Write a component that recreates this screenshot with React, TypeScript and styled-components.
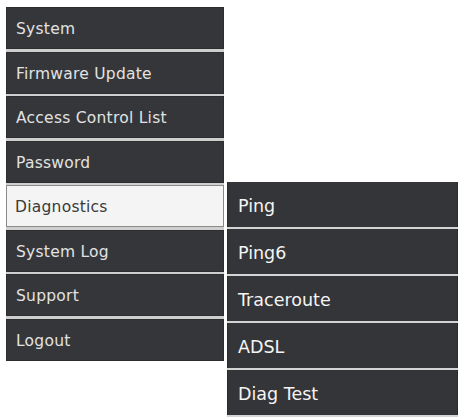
import React from "react";
import styled, { createGlobalStyle } from "styled-components";

const Global = createGlobalStyle`
  html, body { margin: 0; padding: 0; background: #ffffff; }
  body { font-family: "DejaVu Sans", Verdana, sans-serif; }
`;

const Page = styled.div`
  display: flex;
  align-items: flex-start;
  padding: 7px 0 0 6px;
  gap: 3px;
`;

const Menu = styled.ul`
  list-style: none;
  margin: 0;
  padding: 0;
  width: 218px;
  display: flex;
  flex-direction: column;
  background: #cfcfcf;
  gap: 2.5px;
`;

const Item = styled.li<{ $active?: boolean }>`
  height: 42px;
  box-sizing: border-box;
  display: flex;
  align-items: center;
  padding: 2px 0 0 ${(p) => (p.$active ? "8px" : "9px")};
  font-size: 15.5px;
  letter-spacing: 0.25px;
  background: ${(p) => (p.$active ? "#f4f4f4" : "#353639")};
  color: ${(p) => (p.$active ? "#3a3a3a" : "#e2e2e2")};
  border: ${(p) => (p.$active ? "1px solid #8a8a8a" : "1px solid #2c2d2f")};
`;

const SubMenu = styled.ul`
  list-style: none;
  margin: 175px 0 0 0;
  padding: 0 0 2px 0;
  width: 231px;
  display: flex;
  flex-direction: column;
  background: #d4d4d4;
  gap: 2px;
`;

const SubItem = styled.li`
  height: 45px;
  box-sizing: border-box;
  display: flex;
  align-items: center;
  padding: 2px 0 0 10px;
  font-size: 17.5px;
  color: #f4f4f4;
  background: #343538;
  border-left: 1px solid #2a2b2d;
  border-right: 1px solid #2a2b2d;
`;

const mainItems = [
  "System",
  "Firmware Update",
  "Access Control List",
  "Password",
  "Diagnostics",
  "System Log",
  "Support",
  "Logout",
];

const subItems = ["Ping", "Ping6", "Traceroute", "ADSL", "Diag Test"];

export default function App() {
  return (
    <>
      <Global />
      <Page>
        <Menu>
          {mainItems.map((m) => (
            <Item key={m} $active={m === "Diagnostics"}>
              {m}
            </Item>
          ))}
        </Menu>
        <SubMenu>
          {subItems.map((s) => (
            <SubItem key={s}>{s}</SubItem>
          ))}
        </SubMenu>
      </Page>
    </>
  );
}
